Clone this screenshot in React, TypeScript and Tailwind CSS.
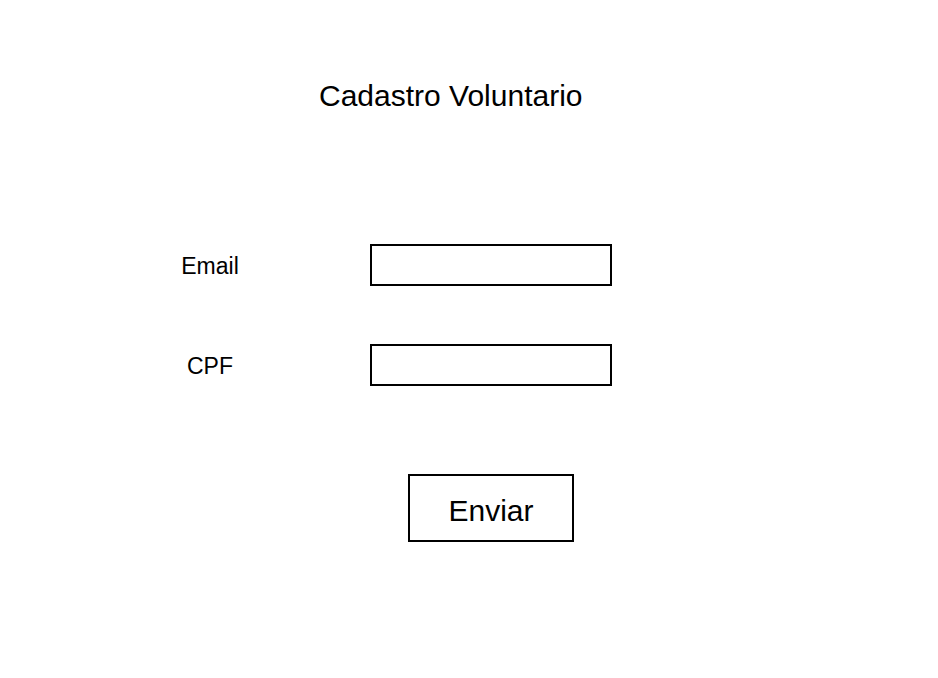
export default function App() {
  return (
    <div className="w-[938px] h-[678px] bg-white text-black font-['Liberation_Sans',Arial,sans-serif] flex flex-col">
      {/* Title */}
      <h1 className="mt-[78px] ml-[319px] text-[30px] leading-[36px] font-normal">
        Cadastro Voluntario
      </h1>

      {/* Email */}
      <div className="mt-[130px] flex items-center">
        <label className="ml-[150px] w-[120px] pt-[2px] text-center text-[23px] leading-[26px]">Email</label>
        <input className="ml-[100px] w-[242px] h-[42px] border-2 border-black outline-none px-2" />
      </div>

      {/* CPF */}
      <div className="mt-[58px] flex items-center">
        <label className="ml-[150px] w-[120px] pt-[2px] text-center text-[23px] leading-[26px]">CPF</label>
        <input className="ml-[100px] w-[242px] h-[42px] border-2 border-black outline-none px-2" />
      </div>

      {/* Submit */}
      <button className="mt-[88px] ml-[408px] w-[166px] h-[68px] pt-[5px] border-2 border-black text-[30px] leading-[36px]">
        Enviar
      </button>
    </div>
  );
}
